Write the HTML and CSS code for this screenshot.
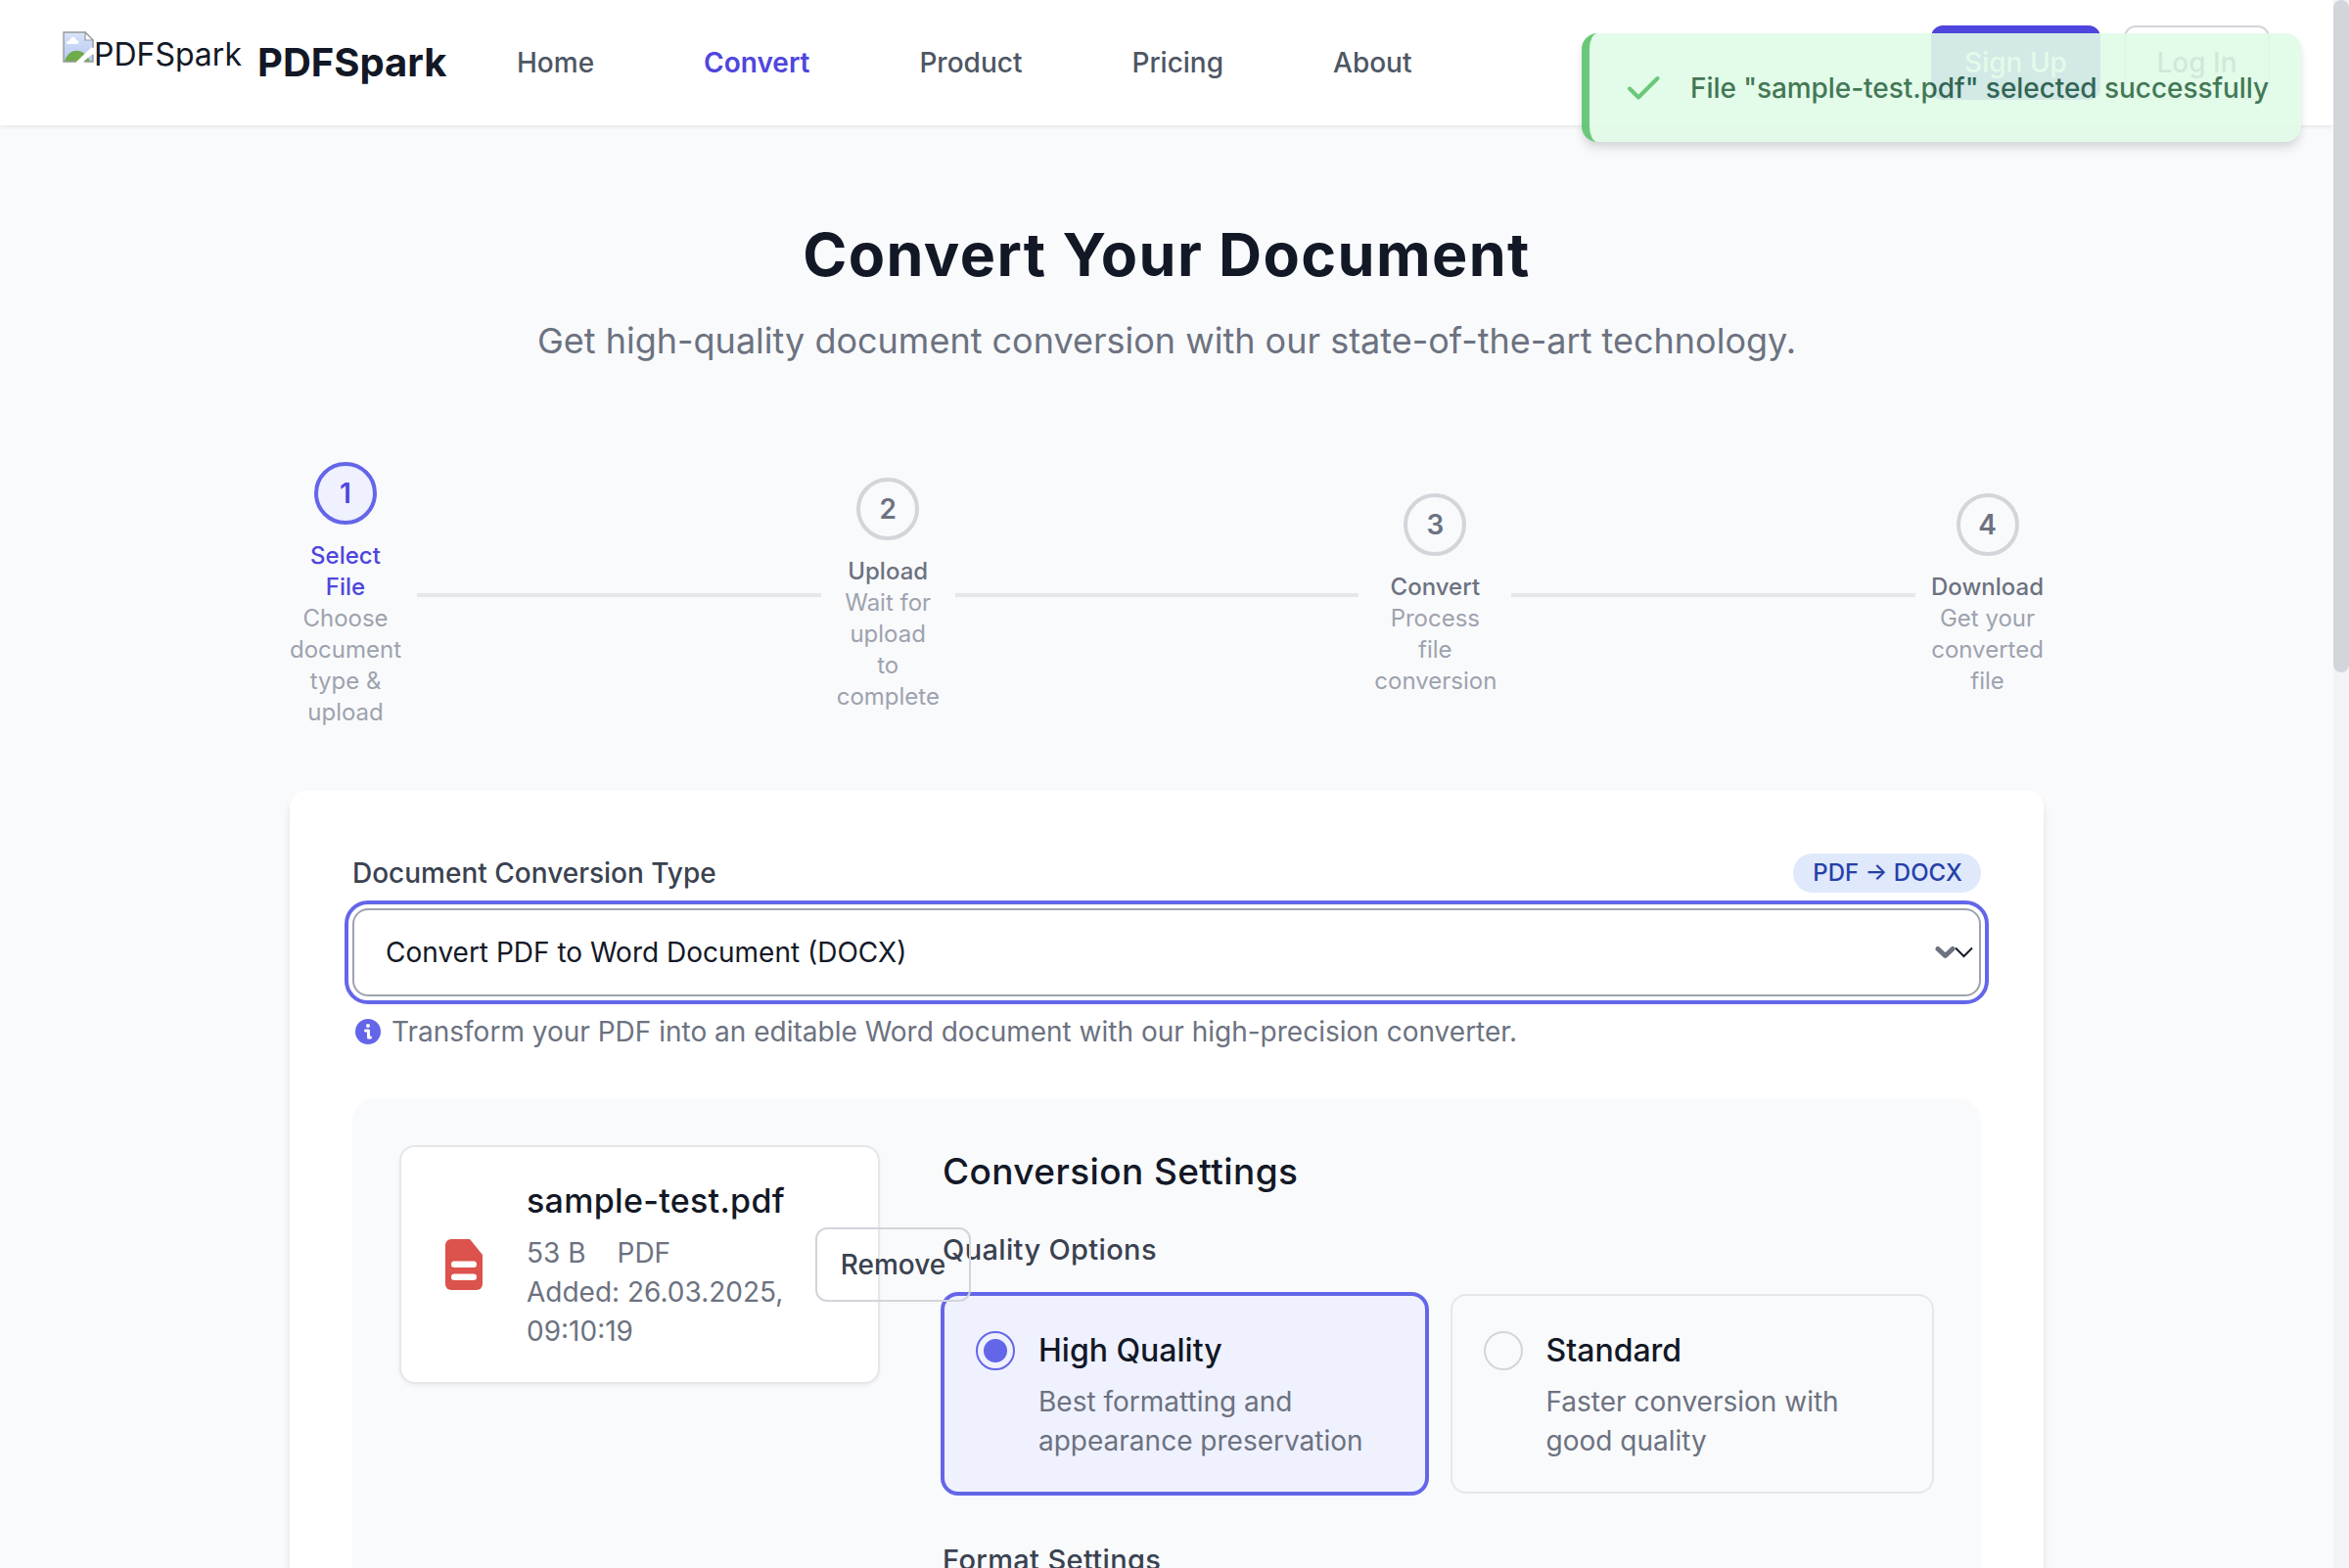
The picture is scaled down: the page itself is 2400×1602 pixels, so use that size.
FILE: index.html
```html
<!DOCTYPE html>
<html lang="en">
<head>
<meta charset="utf-8">
<title>PDFSpark</title>
<link rel="stylesheet" href="styles.css">
</head>
<body>
<header class="header">
  <div class="brand">
    <span class="logo-alt"><svg class="logo-icon" viewBox="0 0 32 32"><defs><linearGradient id="sky" x1="0" y1="0" x2="0" y2="1"><stop offset="0" stop-color="#d9e4fa"/><stop offset="1" stop-color="#b3c7ef"/></linearGradient></defs><path d="M1 1h22l8 8v22H1z" fill="url(#sky)"/><path d="M4 12c0-2 2-3 3-2 1-5 6-5 7-1 3 0 3 4 1 4H5z" fill="#fff"/><path d="M2 31c4-15 20-15 26 0z" fill="#6fab4a"/><path d="M13 32 32 14v8L20 32z" fill="#fff"/><path d="M31 17V9l-8-8H1v30h13M22 31h9v-7" fill="none" stroke="#999" stroke-width="1.4"/><path d="M23 1v8h8z" fill="#fff" stroke="#999" stroke-width="1.2"/></svg><span class="logo-text">PDFSpark</span></span>
    <span class="brand-name">PDFSpark</span>
  </div>
  <nav class="nav"><a>Home</a><a class="active">Convert</a><a>Product</a><a>Pricing</a><a>About</a></nav>
  <div class="auth"><button class="btn btn-primary">Sign Up</button><button class="btn">Log In</button></div>
</header>
<main class="main">
  <h1 class="title">Convert Your Document</h1>
  <p class="subtitle">Get high-quality document conversion with our state-of-the-art technology.</p>
  <div class="steps">
    <div class="step step-select current"><div class="circle">1</div><div class="step-name">Select<br>File</div><div class="step-desc">Choose<br>document<br>type &amp;<br>upload</div></div>
    <div class="line"></div>
    <div class="step step-upload"><div class="circle">2</div><div class="step-name">Upload</div><div class="step-desc">Wait for<br>upload<br>to<br>complete</div></div>
    <div class="line"></div>
    <div class="step step-convert"><div class="circle">3</div><div class="step-name">Convert</div><div class="step-desc">Process<br>file<br>conversion</div></div>
    <div class="line"></div>
    <div class="step step-download"><div class="circle">4</div><div class="step-name">Download</div><div class="step-desc">Get your<br>converted<br>file</div></div>
  </div>
  <section class="card">
    <div class="field-head"><span class="label">Document Conversion Type</span><span class="badge">PDF → DOCX</span></div>
    <div class="select"><span>Convert PDF to Word Document (DOCX)</span>
      <svg class="chevrons" viewBox="0 0 40 14"><path d="M4 3.500 11.500 10.500 19 3.500" fill="none" stroke="#6b7280" stroke-width="5" stroke-linecap="round" stroke-linejoin="round"/><path d="M22 2.500 30.500 11 39 2.500" fill="none" stroke="#151a28" stroke-width="2"/></svg>
    </div>
    <div class="hint"><svg class="info" viewBox="0 0 26 26"><circle cx="13" cy="13" r="13" fill="#6466e9"/><circle cx="13" cy="7" r="2" fill="#fff"/><path d="M10.500 12h3v7h2" fill="none" stroke="#fff" stroke-width="3" stroke-linecap="round" stroke-linejoin="round"/></svg><span>Transform your PDF into an editable Word document with our high-precision converter.</span></div>
    <div class="panel">
      <div class="file">
        <svg class="file-icon" viewBox="0 0 38 52"><path d="M6 0h19l13 16v30a6 6 0 0 1-6 6H6a6 6 0 0 1-6-6V6a6 6 0 0 1 6-6z" fill="#dc524d"/><rect x="6" y="22.500" width="26" height="6.500" rx="3.200" fill="#fff"/><rect x="6" y="35.500" width="26" height="6.500" rx="3.200" fill="#fff"/></svg>
        <div class="file-info"><h3 class="file-name">sample-test.pdf</h3><div class="meta"><span>53 B</span><span>PDF</span></div><div class="added">Added: 26.03.2025,<br>09:10:19</div></div>
        <button class="btn remove">Remove</button>
      </div>
      <div class="settings">
        <h2 class="settings-title">Conversion Settings</h2>
        <h4 class="group quality">Quality Options</h4>
        <div class="options">
          <div class="option selected"><span class="radio"></span><div><div class="option-name">High Quality</div><div class="option-desc">Best formatting and<br>appearance preservation</div></div></div>
          <div class="option"><span class="radio"></span><div><div class="option-name">Standard</div><div class="option-desc">Faster conversion with<br>good quality</div></div></div>
        </div>
        <h4 class="group format">Format Settings</h4>
      </div>
    </div>
  </section>
</main>
<div class="toast"><svg class="check" viewBox="0 0 34 26"><path d="M3 13.500 12 22.500 31.500 3" fill="none" stroke="#5ac36b" stroke-width="4" stroke-linecap="round" stroke-linejoin="round"/></svg><span>File "sample-test.pdf" selected successfully</span></div>
<div class="scrollbar"><div class="thumb"></div></div>
</body>
</html>
```
FILE: styles.css
```css
* { box-sizing: border-box; margin: 0; }
body { width: 2400px; height: 1602px; overflow: hidden; position: relative; background: #f9fafc; color: #131826; font: 400 28px/40px Inter, sans-serif; padding-right: 16px; }
.header { height: 128px; display: flex; align-items: center; padding: 0 64px; background: #fff; box-shadow: 0 2px 4px rgba(0,0,0,.07); position: relative; }
.brand { display: flex; width: 464px; height: 64px; align-items: center; }
.logo-alt { display: flex; width: 199px; height: 64px; }
.logo-icon { width: 32px; height: 32px; flex: none; }
.logo-text { font-size: 32px; line-height: 48px; }
.brand-name { font-size: 40px; font-weight: 700; line-height: 56px; }
.nav { display: flex; gap: 112px; font-weight: 500; color: #4e5664; }
.nav .active { color: #4f46dd; font-weight: 600; }
.auth { display: flex; gap: 24px; margin: 0 1px 0 auto; }
.btn { height: 76px; padding: 0 34px; border: 2px solid #d2d5da; border-radius: 12px; background: transparent; font: 500 28px/40px Inter, sans-serif; color: #3a4250; white-space: nowrap; flex: none; }
.auth .btn { width: 149px; padding: 0; }
.auth .btn-primary { width: 173px; background: #4f46dd; border-color: #4f46dd; color: #fff; }
.title { margin-top: 96px; text-align: center; font-size: 61px; font-weight: 700; line-height: 72px; letter-spacing: 1.4px; }
.subtitle { margin-top: 24px; text-align: center; font-size: 36px; line-height: 56px; color: #6c7280; }
.main { padding: 0 296px; }
.steps { display: flex; align-items: center; height: 272px; margin-top: 96px; gap: 16px; }
.step { flex: none; text-align: center; font-size: 24px; line-height: 32px; color: #9da3ae; white-space: nowrap; }
.step-select { width: 114px; }
.step-upload { width: 105px; }
.step-convert { width: 124px; }
.step-download { width: 115px; }
.line { flex: 1; height: 4px; background: #e5e7eb; }
.circle { width: 64px; height: 64px; margin: 0 auto 16px; border: 4px solid #d2d5da; border-radius: 50%; font-size: 28px; font-weight: 600; line-height: 56px; color: #6c7280; }
.step-name { font-weight: 500; color: #6c7280; }
.current .circle { border-color: #6466e9; background: #eff1fe; color: #4f46dd; }
.current .step-name { color: #4f46dd; }
.card { margin-top: 64px; height: 900px; padding: 64px; background: #fff; border-radius: 16px; box-shadow: 0 8px 12px -2px rgba(0,0,0,.1), 0 4px 8px -2px rgba(0,0,0,.06); }
.field-head { display: flex; justify-content: space-between; height: 40px; }
.label { font-weight: 500; color: #3a4250; }
.badge { width: 192px; padding-left: 1px; text-align: center; border-radius: 20px; background: #dfe9fb; color: #263fa8; font-size: 24px; font-weight: 500; }
.select { display: flex; align-items: center; justify-content: space-between; height: 90px; margin-top: 16px; padding: 0 6px 0 32px; border: 2px solid #9da3ae; border-radius: 16px; outline: 4px solid #6466e9; outline-offset: 4px; }
.chevrons { width: 40px; height: 14px; }
.hint { display: flex; align-items: center; gap: 11px; margin-top: 16px; padding-left: 3px; color: #6c7280; }
.info { width: 26px; height: 26px; }
.panel { display: flex; align-items: flex-start; gap: 64px; margin-top: 48px; height: 520px; padding: 48px; border-radius: 24px; background: #f9fafc; }
.file { display: flex; align-items: center; width: 491px; flex: none; height: 244px; padding: 0 0 0 45px; background: #fff; border: 2px solid #e5e7eb; border-radius: 16px; box-shadow: 0 2px 4px rgba(0,0,0,.05); }
.file-icon { width: 38px; height: 52px; flex: none; }
.file-info { width: 263px; margin: 0 32px 0 45px; flex: none; color: #6c7280; white-space: nowrap; }
.file-name { font-size: 34px; font-weight: 500; line-height: 46px; margin-bottom: 10px; color: #131826; letter-spacing: .3px; }
.meta { display: flex; gap: 32px; }
.remove { width: 159px; padding: 0; position: relative; }
.settings { flex: 1; }
.settings-title { font-size: 37px; font-weight: 500; line-height: 54px; letter-spacing: .4px; }
.group { font-size: 29px; font-weight: 500; line-height: 40px; color: #3a4250; letter-spacing: .35px; }
.quality { margin-top: 33px; }
.options { display: grid; grid-template-columns: 1fr 1fr; gap: 24px; margin-top: 25px; }
.option { display: flex; gap: 24px; height: 204px; padding: 32px; border: 2px solid #e5e7eb; border-radius: 16px; }
.option.selected { background: #eff1fe; border-color: #6466e9; box-shadow: 0 0 0 2px #6466e9; }
.radio { width: 40px; height: 40px; margin-top: 4px; flex: none; border: 2px solid #d2d5da; border-radius: 50%; }
.selected .radio { border-color: #6466e9; background: radial-gradient(circle, #6466e9 11.500px, transparent 12.500px); }
.option-name { font-size: 32px; font-weight: 500; line-height: 48px; }
.option-desc { margin-top: 8px; color: #6c7280; white-space: nowrap; }
.format { margin-top: 48px; }
.toast { position: absolute; left: 1616px; top: 34px; width: 735px; height: 111px; display: flex; align-items: center; gap: 31px; padding-left: 38px; background: #e1fbe7; border-left: 8px solid #5ac36b; border-radius: 16px; color: #2f6a44; font-weight: 500; letter-spacing: -.06px; opacity: .9; white-space: nowrap; box-shadow: 0 8px 12px -2px rgba(0,0,0,.12), 0 4px 8px -2px rgba(0,0,0,.08); }
.check { width: 34px; height: 26px; }
.scrollbar { position: absolute; top: 0; right: 0; width: 16px; height: 1602px; background: #f3f4f6; }
.thumb { height: 687px; background: #d2d5da; border-radius: 8px; }
```
